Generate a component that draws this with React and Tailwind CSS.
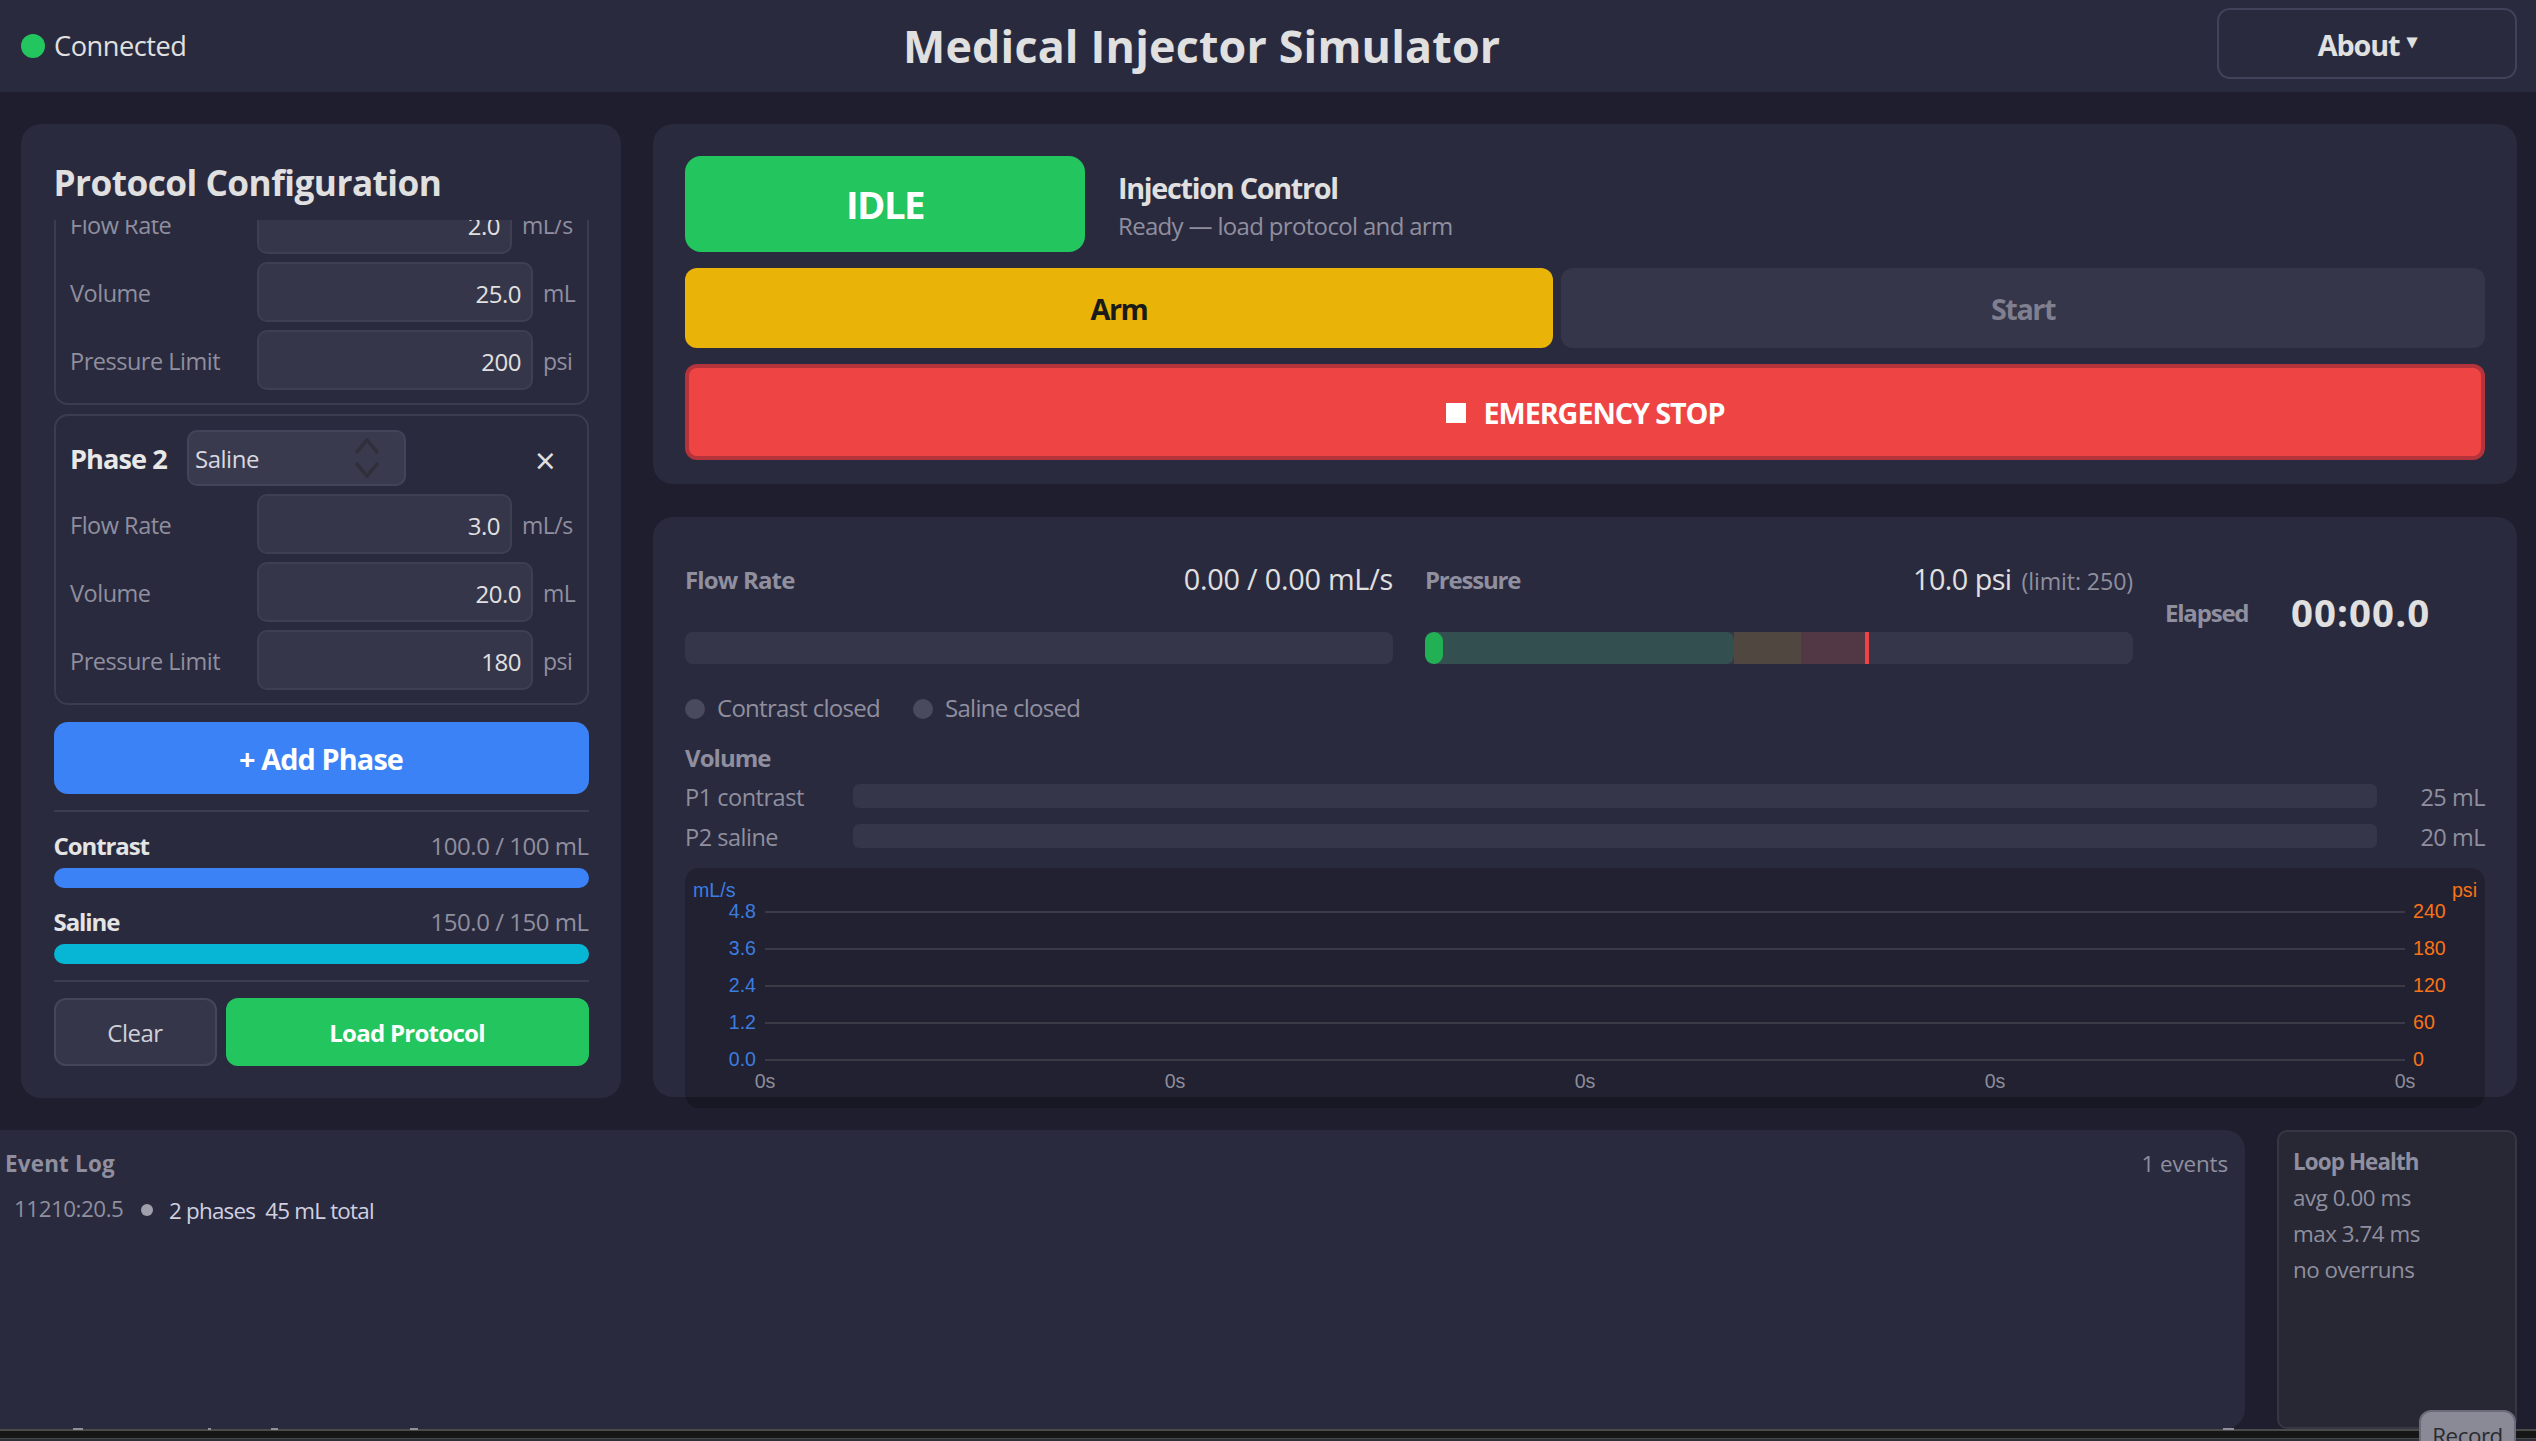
import React from 'react';

const Field = ({ label, value, unit, unitW }) => (
  <div className="flex items-center h-[60px]">
    <span className="w-[186.5px] shrink-0 pt-[3px] text-[23.5px] text-[#8f8f9f] whitespace-nowrap">{label}</span>
    <input readOnly value={value} className="flex-1 min-w-0 h-full rounded-[10px] border-2 border-[#3f3f52] bg-[#36364a] px-[10px] pt-[3px] text-right text-[24px] text-[#e0e0e0] outline-none" />
    <span className={`${unitW} ml-[10px] shrink-0 pt-[3px] text-[23px] text-[#8f8f9f] whitespace-nowrap`}>{unit}</span>
  </div>
);

const PhaseCard = ({ n, fluid, flow, volume, limit }) => (
  <div className="rounded-[14px] border-2 border-[#3c3c50] px-[14.5px] pt-[14px] pb-[13px]">
    <div className="relative flex items-center h-[56px]">
      <span className="w-[117px] shrink-0 pt-[3px] text-[27.2px] font-bold tracking-[-0.035em] text-[#e8e8e8]">Phase {n}</span>
      <div className="relative w-[219px] h-full">
        <select defaultValue={fluid} className="appearance-none w-full h-full rounded-[10px] border-2 border-[#43435a] bg-[#3a3a4e] pl-[6px] pt-[2px] text-[24px] text-[#d8d8e0] outline-none">
          <option>Contrast</option>
          <option>Saline</option>
        </select>
        <svg className="absolute left-[167px] top-[8px]" width="26" height="40" viewBox="0 0 26 40" fill="none" stroke="#30303c" strokeWidth="3.5">
          <path d="M2 15 13 2l11 13" />
          <path d="M2 25 13 38l11-13" />
        </svg>
      </div>
      <button className="absolute right-[17px] top-[13px] text-[36px] leading-[36px] text-[#e0e0e0]">×</button>
    </div>
    <div className="mt-[8px] flex flex-col gap-[8px]">
      <Field label="Flow Rate" value={flow} unit="mL/s" unitW="w-[50px]" />
      <Field label="Volume" value={volume} unit="mL" unitW="w-[29px]" />
      <Field label="Pressure Limit" value={limit} unit="psi" unitW="w-[29px]" />
    </div>
  </div>
);

const Reservoir = ({ name, amount, bar }) => (
  <>
    <div className="mt-[16px] flex h-[36px] items-center justify-between">
      <span className="text-[24px] font-bold tracking-[-0.045em] text-[#e4e4e4]">{name}</span>
      <span className="text-[24px] text-[#8f8f9f]">{amount}</span>
    </div>
    <div className={`mt-[4px] h-[20px] rounded-[10px] ${bar}`} />
  </>
);

const VolumeRow = ({ label, value }) => (
  <div className="flex h-[24px] items-center">
    <span className="w-[168px] shrink-0 pt-[3px] text-[23.5px] text-[#8f8f9f] whitespace-nowrap">{label}</span>
    <div className="h-full flex-1 rounded-[6px] bg-[#36364a]" />
    <span className="w-[108px] shrink-0 pt-[3px] text-right text-[23.5px] text-[#8f8f9f] whitespace-nowrap">{value}</span>
  </div>
);

const Chart = () => {
  const rows = [
    { y: 44, left: '4.8', right: '240' },
    { y: 81, left: '3.6', right: '180' },
    { y: 118, left: '2.4', right: '120' },
    { y: 155, left: '1.2', right: '60' },
    { y: 192, left: '0.0', right: '0' },
  ];
  const ticks = [80, 490, 900, 1310, 1720];
  return (
    <svg className="mt-[20px] block rounded-[14px] bg-black/20" width="1800" height="240" fontFamily="'Liberation Sans', Arial, sans-serif" fontSize="19.6" letterSpacing="0">
      <text x="8" y="29" fill="#3b7de0">mL/s</text>
      <text x="1792" y="29" fill="#f97316" textAnchor="end">psi</text>
      {rows.map(r => (
        <g key={r.y}>
          <line x1="80" x2="1720" y1={r.y} y2={r.y} stroke="#3b3b48" strokeWidth="2" />
          <text x="71" y={r.y + 6} fill="#3b7de0" textAnchor="end">{r.left}</text>
          <text x="1728" y={r.y + 6} fill="#f97316">{r.right}</text>
        </g>
      ))}
      {ticks.map(x => <text key={x} x={x} y="220" fill="#8d8d99" textAnchor="middle">0s</text>)}
    </svg>
  );
};

// bits of a hidden line of text that stick out under the event log
const stray = ['left-[73px] w-[10px]', 'left-[208px] w-[3px]', 'left-[271px] w-[7px]', 'left-[410px] w-[8px]', 'left-[2223px] w-[11px]'];

export default function App() {
  return (
    <div className="relative flex h-[1441px] flex-col overflow-hidden bg-[#1e1e2e] font-['Open_Sans',sans-serif] tracking-[-0.03em] text-[#e0e0e0]">
      <header className="flex h-[92px] shrink-0 items-start justify-between bg-[#2a2a3e] pl-[21px] pr-[19px]">
        <div className="flex h-full items-center gap-[9px]">
          <span className="h-[24px] w-[24px] rounded-full bg-[#22c55e]" />
          <span className="text-[27.2px] text-[#e0e0e0]">Connected</span>
        </div>
        <h1 className="flex h-full items-center text-[44.8px] font-bold tracking-[0.004em] text-[#e0e0e0]">Medical Injector Simulator</h1>
        <button className="mt-[8px] flex h-[71px] w-[300px] items-center justify-center rounded-[13px] border-2 border-[#42425a] pt-[2px] text-[28.8px] font-bold tracking-[-0.04em]">
          About<span className="ml-[8px] -mt-[8px] text-[20px]">▾</span>
        </button>
      </header>

      <div className="flex h-[974px] shrink-0 gap-[32px] pl-[21px] pr-[19px] mt-[32px]">
        <aside className="w-[600px] shrink-0 rounded-[20px] bg-[#2a2a3e] px-[32.5px] pt-[32px]">
          <h2 className="flex h-[52px] items-center text-[35.2px] font-bold tracking-[-0.015em] text-[#e0e0e0]">Protocol Configuration</h2>
          <div className="mt-[12px] h-[485px] overflow-hidden">
            <div className="-mt-[106px] flex flex-col gap-[9px]">
              <PhaseCard n={1} fluid="Contrast" flow="2.0" volume="25.0" limit="200" />
              <PhaseCard n={2} fluid="Saline" flow="3.0" volume="20.0" limit="180" />
            </div>
          </div>
          <button className="mt-[17px] h-[72px] w-full rounded-[14px] bg-[#3b82f6] pt-[2px] text-[28.8px] font-bold tracking-[-0.03em] text-white">+ Add Phase</button>
          <div className="mt-[16px] h-[2px] bg-[#3c3c50]" />
          <Reservoir name="Contrast" amount="100.0 / 100 mL" bar="bg-[#3b82f6]" />
          <Reservoir name="Saline" amount="150.0 / 150 mL" bar="bg-[#06b6d4]" />
          <div className="mt-[16px] h-[2px] bg-[#3c3c50]" />
          <div className="mt-[16px] flex h-[68px] gap-[9px]">
            <button className="w-[163px] rounded-[12px] border-2 border-[#46465a] bg-[#36364a] pt-[2px] text-[24px] text-[#d0d0d8]">Clear</button>
            <button className="flex-1 rounded-[12px] bg-[#22c55e] pt-[2px] text-[24px] font-bold tracking-[-0.03em] text-white">Load Protocol</button>
          </div>
        </aside>

        <div className="flex min-w-0 flex-1 flex-col gap-[33px]">
          <section className="h-[360px] shrink-0 rounded-[20px] bg-[#2a2a3e] px-[32px] pt-[32px]">
            <div className="flex h-[96px] items-center gap-[33px]">
              <div className="flex h-full w-[400px] items-center justify-center rounded-[16px] bg-[#22c55e] pt-[2px] text-[38.4px] font-bold tracking-[-0.04em] text-white">IDLE</div>
              <div className="pt-[4px]">
                <div className="text-[28.8px] font-bold tracking-[-0.045em] leading-[40px] text-[#e0e0e0]">Injection Control</div>
                <div className="text-[24px] leading-[36px] tracking-[-0.028em] text-[#8f8f9f]">Ready — load protocol and arm</div>
              </div>
            </div>
            <div className="mt-[16px] flex h-[80px] gap-[8px]">
              <button className="w-[868px] rounded-[12px] bg-[#eab308] pt-[2px] text-[28.8px] font-bold tracking-[-0.05em] text-[#1a1a1a]">Arm</button>
              <button className="flex-1 rounded-[12px] bg-[#36364a] pt-[2px] text-[28.8px] font-bold tracking-[-0.05em] text-[#7f7f8f]">Start</button>
            </div>
            <button className="mt-[16px] flex h-[96px] w-full items-center justify-center gap-[18px] rounded-[12px] border-4 border-[#b5333a] bg-[#ef4444] pt-[1px] text-[28.8px] font-bold tracking-[-0.038em] text-white">
              <span className="h-[20px] w-[20px] bg-white" />
              EMERGENCY STOP
            </button>
          </section>

          <section className="h-[580px] shrink-0 rounded-[20px] bg-[#2a2a3e] px-[32px] pt-[45px]">
            <div className="flex h-[102px] items-center gap-[32px]">
              <div className="w-[708px] shrink-0">
                <div className="flex h-[40px] items-center justify-between -mt-[2px]">
                  <span className="text-[24px] font-bold tracking-[-0.035em] text-[#8f8f9f]">Flow Rate</span>
                  <span className="-mt-[2px] text-[28.8px] tracking-[-0.008em] text-[#e0e0e0]">0.00 / 0.00 mL/s</span>
                </div>
                <div className="mt-[32px] h-[32px] rounded-[8px] bg-[#36364a]" />
              </div>
              <div className="w-[708px] shrink-0">
                <div className="flex h-[40px] items-center justify-between -mt-[2px]">
                  <span className="text-[24px] font-bold tracking-[-0.05em] text-[#8f8f9f]">Pressure</span>
                  <span className="flex items-baseline gap-[10px]">
                    <span className="-mt-[2px] text-[28.8px] tracking-[-0.02em] text-[#e0e0e0]">10.0 psi</span>
                    <span className="text-[23.2px] tracking-[-0.005em] text-[#8f8f9f]">(limit: 250)</span>
                  </span>
                </div>
                <div className="relative mt-[32px] flex h-[32px] overflow-hidden rounded-[8px] bg-[#36364a]">
                  <div className="w-[309px] rounded-r-[8px] bg-[#334f4f]" />
                  <div className="w-[67px] bg-[#504840]" />
                  <div className="w-[64px] bg-[#523845]" />
                  <div className="w-[4px] bg-[#ef4444]" />
                  <div className="absolute left-0 top-0 h-full w-[18px] rounded-[9px] bg-[#22b055]" />
                </div>
              </div>
              <div className="flex items-center">
                <span className="w-[126px] shrink-0 text-[24px] font-bold tracking-[-0.05em] text-[#8f8f9f]">Elapsed</span>
                <span className="text-[38.4px] font-bold tracking-[0.028em] text-[#e0e0e0]">00:00.0</span>
              </div>
            </div>

            <div className="mt-[30px] flex h-[28px] items-center text-[24px] tracking-[-0.03em] text-[#8f8f9f]">
              <span className="mt-[2px] h-[20px] w-[20px] rounded-full bg-[#4a4a5e]" />
              <span className="ml-[12px] w-[196px]">Contrast closed</span>
              <span className="mt-[2px] h-[20px] w-[20px] rounded-full bg-[#4a4a5e]" />
              <span className="ml-[12px]">Saline closed</span>
            </div>
            <div className="mt-[22px] flex h-[28px] items-center text-[24px] font-bold tracking-[-0.04em] text-[#8f8f9f]">Volume</div>
            <div className="mt-[12px] flex flex-col gap-[16px]">
              <VolumeRow label="P1 contrast" value="25 mL" />
              <VolumeRow label="P2 saline" value="20 mL" />
            </div>
            <Chart />
          </section>
        </div>
      </div>

      <div className="mt-[32px] flex h-[299px] shrink-0 gap-[32px] pr-[19px]">
        <section className="w-[2245px] shrink-0 rounded-r-[20px] bg-[#2a2a3e] pl-[5px] pr-[17px] pt-[18px]">
          <div className="flex h-[32px] items-center justify-between">
            <span className="text-[22.4px] font-bold tracking-[0.01em] text-[#8f8f9f]">Event Log</span>
            <span className="text-[22.4px] tracking-[-0.005em] text-[#8f8f9f]">1 events</span>
          </div>
          <div className="mt-[14px] flex h-[32px] items-center pl-[9px] text-[22.4px]">
            <span className="w-[127px] shrink-0 -mt-[2px] text-[#8f8f9f]">11210:20.5</span>
            <span className="h-[12px] w-[12px] shrink-0 rounded-full bg-[#a0a0ac]" />
            <span className="ml-[16px] mt-[2px] tracking-[-0.035em] text-[#d0d0e0] whitespace-pre">2 phases  45 mL total</span>
          </div>
        </section>
        <section className="w-[240px] shrink-0 rounded-[10px] border-2 border-[#363644] bg-[#282835] pl-[14px] pt-[12px] text-[22.4px] leading-[36px] text-[#8f8f9f]">
          <div className="font-bold tracking-[-0.04em]">Loop Health</div>
          <div>avg 0.00 ms</div>
          <div>max 3.74 ms</div>
          <div>no overruns</div>
        </section>
      </div>

      <div className="flex-1 border-t-2 border-[#4a4a4a] bg-[#161616]">
        <div className="mt-[7px] h-[1px] bg-[#444a4c]" />
        <div className="h-full bg-[#2d3038]" />
      </div>
      {stray.map(s => <span key={s} className={`absolute top-[1428px] h-[2px] bg-[#8f8f9a] ${s}`} />)}
      <button className="absolute left-[2419px] top-[1410px] h-[60px] w-[97px] rounded-[12px] border-2 border-[#6a6a7a] bg-[#8a8a96] pb-[8px] text-[22.4px] text-[#2a2a30]">Record</button>
    </div>
  );
}
